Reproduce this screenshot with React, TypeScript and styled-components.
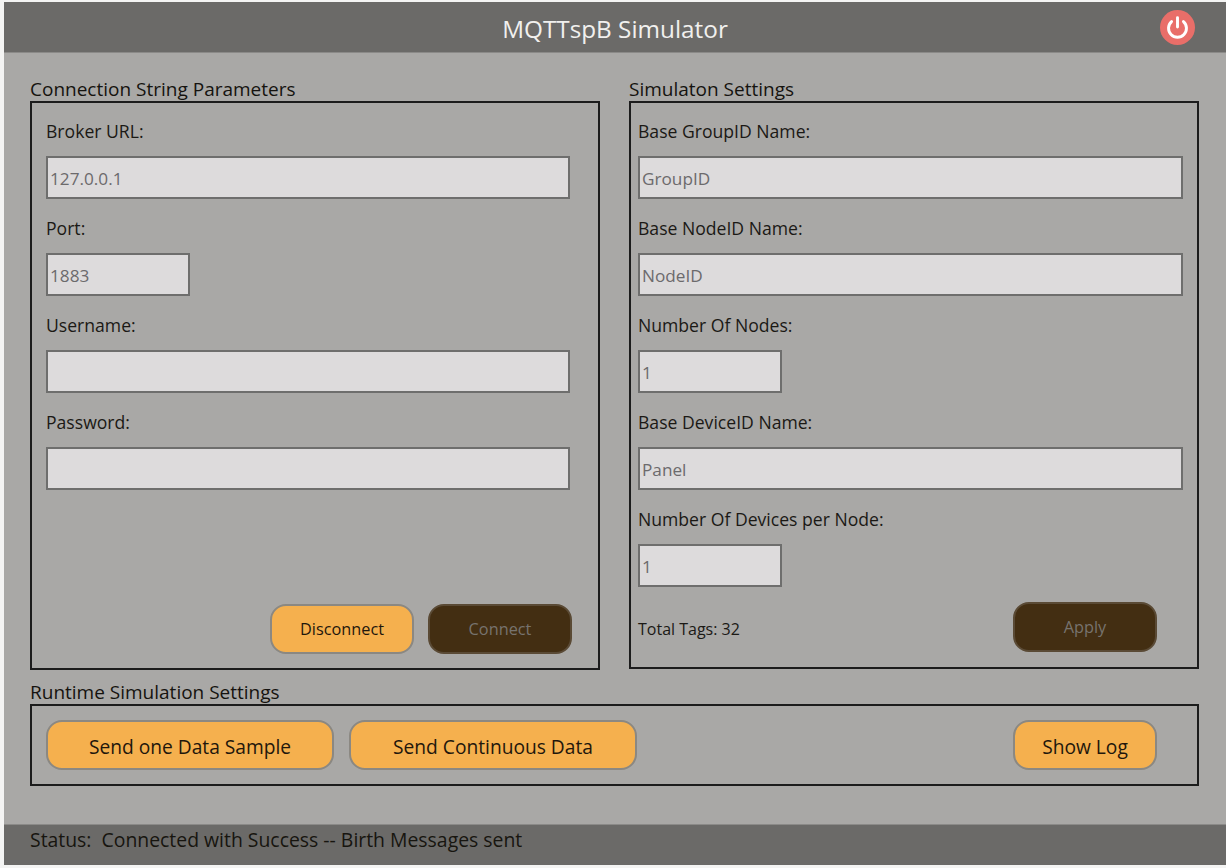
import React from 'react';
import styled, { createGlobalStyle } from 'styled-components';

const GlobalStyle = createGlobalStyle`
    html, body {
        margin: 0;
        padding: 0;
        background: #f4f4f3;
    }
    body {
        font-family: 'Open Sans', 'Noto Sans', sans-serif;
    }
`;

const Window = styled.div`
    position: relative;
    margin: 2px 0 0 4px;
    width: 1222px;
    height: 863px;
    background: #a9a8a6;
    overflow: hidden;
`;

const Header = styled.header`
    height: 51px;
    background: #6b6a68;
    border-bottom: 1px solid #8b8a88;
    box-sizing: border-box;
    display: flex;
    align-items: center;
    justify-content: center;
    position: relative;
`;

const Title = styled.h1`
    margin: 2px 0 0;
    font-size: 24.3px;
    font-weight: 400;
    color: #f1f0ee;
`;

const PowerButton = styled.button`
    position: absolute;
    left: 1156px;
    top: 8px;
    width: 35px;
    height: 35px;
    padding: 0;
    border: 0;
    border-radius: 50%;
    background: #e96e69;
    display: flex;
    align-items: center;
    justify-content: center;
`;

const Section = styled.section<{ $left: number; $top: number; $width: number; $height: number }>`
    position: absolute;
    left: ${p => p.$left}px;
    top: ${p => p.$top}px;
    width: ${p => p.$width}px;
    height: ${p => p.$height}px;
`;

const SectionTitle = styled.h2`
    margin: 0;
    height: 24px;
    font-size: 19px;
    line-height: 24px;
    font-weight: 400;
    color: #15130f;
    white-space: nowrap;
`;

const Frame = styled.div<{ $inset?: number }>`
    box-sizing: border-box;
    height: calc(100% - 24px);
    border: 2px solid #1c1c1c;
    padding: 0 0 0 ${p => p.$inset ?? 14}px;
    position: relative;
`;

const Label = styled.label`
    display: block;
    height: 26px;
    margin-top: 16px;
    font-size: 17.6px;
    line-height: 26px;
    color: #1b1915;
    white-space: nowrap;

    &:first-child {
        margin-top: 15px;
    }
`;

const Input = styled.input<{ $short?: boolean; $wide?: boolean }>`
    display: block;
    box-sizing: border-box;
    width: ${p => (p.$short ? 144 : p.$wide ? 545 : 524)}px;
    height: 43px;
    margin: 12px 0 0 0;
    padding: 2px 3px 0 2px;
    background: #dddbdc;
    border: 2px solid #6e6e6d;
    outline: none;
    font-family: inherit;
    font-size: 17.2px;
    color: #6c6a6c;
`;

const Footer = styled.div<{ $top: number }>`
    position: absolute;
    left: 0;
    right: 0;
    top: ${p => p.$top}px;
    height: 50px;
`;

const ActionButton = styled.button<{ $dark?: boolean; $left: number; $width?: number; $big?: boolean }>`
    position: absolute;
    top: 0;
    left: ${p => p.$left}px;
    box-sizing: border-box;
    width: ${p => p.$width ?? 144}px;
    height: 50px;
    padding: ${p => (p.$big ? 2 : 0)}px 0 0;
    border-radius: 16px;
    border: 2px solid ${p => (p.$dark ? '#5a4a35' : '#8b8882')};
    background: ${p => (p.$dark ? '#432e12' : '#f5b04e')};
    color: ${p => (p.$dark ? '#77736e' : '#1f170c')};
    font-family: inherit;
    font-size: ${p => (p.$big ? 19.2 : 16.3)}px;
    white-space: nowrap;
`;

const TotalTags = styled.span`
    position: absolute;
    left: 7px;
    top: 15px;
    font-size: 16px;
    line-height: 24px;
    color: #1b1915;
`;

const StatusBar = styled.footer`
    position: absolute;
    left: 0;
    right: 0;
    top: 822px;
    height: 41px;
    background: #6b6a68;
    border-top: 1px solid #8b8a88;
    box-sizing: border-box;
    padding-left: 26px;
    font-size: 19.4px;
    line-height: 30px;
    color: #17150f;
    white-space: pre;
`;

const Field = ({ label, value, short, wide }: { label: string; value?: string; short?: boolean; wide?: boolean }) => (
    <>
        <Label>{label}</Label>
        <Input defaultValue={value} $short={short} $wide={wide} />
    </>
);

export default function App() {
    return (
        <>
            <GlobalStyle />
            <Window>
                <Header>
                    <Title>MQTTspB Simulator</Title>
                    <PowerButton aria-label="Power">
                        <svg width="25" height="25" viewBox="0 0 24 24" fill="none" stroke="#fff" strokeWidth="2.8" strokeLinecap="round">
                            <path d="M12 2.5v9" />
                            <path d="M6.3 6.3a8.6 8.6 0 1 0 11.4 0" />
                        </svg>
                    </PowerButton>
                </Header>

                <Section $left={26} $top={75} $width={570} $height={593}>
                    <SectionTitle>Connection String Parameters</SectionTitle>
                    <Frame>
                        <Field label="Broker URL:" value="127.0.0.1" />
                        <Field label="Port:" value="1883" short />
                        <Field label="Username:" />
                        <Field label="Password:" />
                        <Footer $top={501}>
                            <ActionButton $left={238}>Disconnect</ActionButton>
                            <ActionButton $left={396} $dark>Connect</ActionButton>
                        </Footer>
                    </Frame>
                </Section>

                <Section $left={625} $top={75} $width={570} $height={592}>
                    <SectionTitle>Simulaton Settings</SectionTitle>
                    <Frame $inset={7}>
                        <Field label="Base GroupID Name:" value="GroupID" wide />
                        <Field label="Base NodeID Name:" value="NodeID" wide />
                        <Field label="Number Of Nodes:" value="1" short />
                        <Field label="Base DeviceID Name:" value="Panel" wide />
                        <Field label="Number Of Devices per Node:" value="1" short />
                        <Footer $top={499}>
                            <TotalTags>Total Tags: 32</TotalTags>
                            <ActionButton $left={382} $dark>Apply</ActionButton>
                        </Footer>
                    </Frame>
                </Section>

                <Section $left={26} $top={678} $width={1169} $height={106}>
                    <SectionTitle>Runtime Simulation Settings</SectionTitle>
                    <Frame>
                        <Footer $top={14}>
                            <ActionButton $left={14} $width={288} $big>Send one Data Sample</ActionButton>
                            <ActionButton $left={317} $width={288} $big>Send Continuous Data</ActionButton>
                            <ActionButton $left={981} $big>Show Log</ActionButton>
                        </Footer>
                    </Frame>
                </Section>

                <StatusBar>{'Status:  Connected with Success -- Birth Messages sent'}</StatusBar>
            </Window>
        </>
    );
}
